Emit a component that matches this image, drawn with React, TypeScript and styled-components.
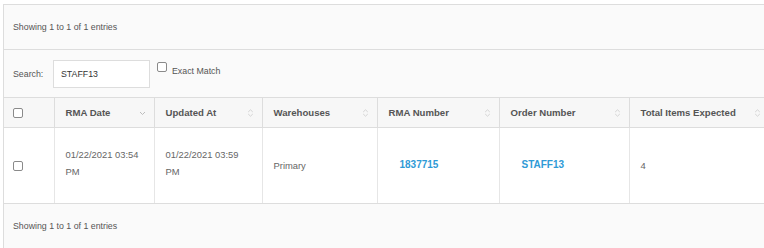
import styled, { createGlobalStyle } from "styled-components";

const GlobalStyle = createGlobalStyle`
  html, body {
    margin: 0;
    padding: 0;
    background: #ffffff;
    overflow: hidden;
    font-family: "Liberation Sans", Arial, sans-serif;
  }
`;

const columns = [
  { label: "RMA Date", width: 100, sort: "desc" },
  { label: "Updated At", width: 108, sort: "both" },
  { label: "Warehouses", width: 115, sort: "both" },
  { label: "RMA Number", width: 122, sort: "both" },
  { label: "Order Number", width: 130, sort: "both" },
  { label: "Total Items Expected", width: 140, sort: "both" },
];

const SortIcon = ({ kind }: { kind: string }) => (
  <StyledSortIcon width="7" height="10" viewBox="0 0 7 10">
    {kind === "desc" ? (
      <path d="M1 4 L3.5 6.5 L6 4" fill="none" stroke="#b5b5b5" strokeWidth="0.9" />
    ) : (
      <>
        <path d="M1.2 4 L3.5 1.8 L5.8 4" fill="none" stroke="#cfcfcf" strokeWidth="0.9" />
        <path d="M1.2 6 L3.5 8.2 L5.8 6" fill="none" stroke="#cfcfcf" strokeWidth="0.9" />
      </>
    )}
  </StyledSortIcon>
);

const App = () => {
  return (
    <>
      <GlobalStyle />
      <StyledPanel>
        <StyledInfoBar>Showing 1 to 1 of 1 entries</StyledInfoBar>
        <StyledSearchBar>
          <StyledLabel>Search:</StyledLabel>
          <StyledSearchInput defaultValue="STAFF13" />
          <StyledExact>
            <StyledCheckbox type="checkbox" />
            <StyledExactText>Exact Match</StyledExactText>
          </StyledExact>
        </StyledSearchBar>
        <StyledTable>
          <colgroup>
            <col style={{ width: 50 }} />
            {columns.map((c) => (
              <col key={c.label} style={{ width: c.width }} />
            ))}
          </colgroup>
          <thead>
            <tr>
              <StyledHeadCell $check>
                <StyledCheckbox type="checkbox" />
              </StyledHeadCell>
              {columns.map((c) => (
                <StyledHeadCell key={c.label}>
                  <StyledHeadInner>
                    <span>{c.label}</span>
                    <SortIcon kind={c.sort} />
                  </StyledHeadInner>
                </StyledHeadCell>
              ))}
            </tr>
          </thead>
          <tbody>
            <tr>
              <StyledCell $check>
                <StyledCheckbox type="checkbox" />
              </StyledCell>
              <StyledCell $multi>01/22/2021 03:54 PM</StyledCell>
              <StyledCell $multi>01/22/2021 03:59 PM</StyledCell>
              <StyledCell>Primary</StyledCell>
              <StyledCell $link>
                <StyledLink href="#">1837715</StyledLink>
              </StyledCell>
              <StyledCell $link>
                <StyledLink href="#">STAFF13</StyledLink>
              </StyledCell>
              <StyledCell>4</StyledCell>
            </tr>
          </tbody>
        </StyledTable>
        <StyledFooter>Showing 1 to 1 of 1 entries</StyledFooter>
      </StyledPanel>
    </>
  );
};

export default App;

const StyledPanel = styled.div`
  margin: 4px 0 0 3px;
  width: 900px;
  border-left: 1px solid #dddddd;
  border-top: 1px solid #dddddd;
  background: #fafafa;
  color: #555555;
`;

const StyledInfoBar = styled.div`
  height: 44px;
  display: flex;
  align-items: center;
  padding-left: 9px;
  font-size: 8.8px;
  color: #555555;
  background: #fafafa;
  border-bottom: 1px solid #dddddd;
`;

const StyledSearchBar = styled.div`
  height: 47px;
  display: flex;
  align-items: center;
  padding-left: 9px;
  background: #fafafa;
  font-size: 8.8px;
  color: #555555;
`;

const StyledLabel = styled.span`
  width: 40px;
`;

const StyledSearchInput = styled.input`
  box-sizing: border-box;
  width: 97px;
  height: 28px;
  border: 1px solid #dddddd;
  background: #ffffff;
  padding: 0 7px;
  font-family: "Liberation Sans", Arial, sans-serif;
  font-size: 8.8px;
  color: #333333;
  outline: none;
`;

const StyledExact = styled.label`
  display: flex;
  align-items: flex-start;
  gap: 5px;
  margin-left: 7px;
  margin-top: -10px;
  font-size: 8.8px;
  color: #555555;
`;

const StyledExactText = styled.span`
  margin-top: 4px;
`;

const StyledCheckbox = styled.input`
  appearance: none;
  box-sizing: border-box;
  width: 10px;
  height: 10px;
  margin: 0;
  border: 1px solid #8a8a8a;
  border-radius: 2px;
  background: #ffffff;
  display: block;
`;

const StyledTable = styled.table`
  table-layout: fixed;
  border-collapse: collapse;
  width: 765px;
`;

const StyledHeadCell = styled.th<{ $check?: boolean }>`
  height: 29px;
  padding: 0 ${(p) => (p.$check ? "9px" : "8px")} 0 ${(p) => (p.$check ? "9px" : "11px")};
  background: #f7f7f7;
  border-top: 1px solid #dddddd;
  border-bottom: 1px solid #dddddd;
  border-right: 1px solid #dddddd;
  text-align: left;
  font-size: 9.6px;
  font-weight: bold;
  color: #555555;
`;

const StyledHeadInner = styled.div`
  display: flex;
  align-items: center;
  justify-content: space-between;
`;

const StyledSortIcon = styled.svg`
  flex: none;
  display: block;
`;

const StyledCell = styled.td<{ $check?: boolean; $link?: boolean; $multi?: boolean }>`
  height: ${(p) => (p.$multi ? "69px" : "75px")};
  padding: 0 ${(p) => (p.$check ? "9px" : "8px")} ${(p) => (p.$multi ? "6px" : "0")}
    ${(p) => (p.$check ? "9px" : p.$link ? "22px" : "11px")};
  background: #ffffff;
  border-bottom: 1px solid #dddddd;
  border-right: 1px solid #e6e6e6;
  vertical-align: middle;
  font-size: 9.4px;
  line-height: 17px;
  color: #666666;
`;

const StyledLink = styled.a`
  color: #2f9ad6;
  font-weight: bold;
  font-size: 10px;
  text-decoration: none;
  position: relative;
  top: -1px;
`;

const StyledFooter = styled.div`
  height: 44px;
  display: flex;
  align-items: center;
  padding-left: 9px;
  font-size: 8.8px;
  color: #555555;
  background: #fafafa;
`;
